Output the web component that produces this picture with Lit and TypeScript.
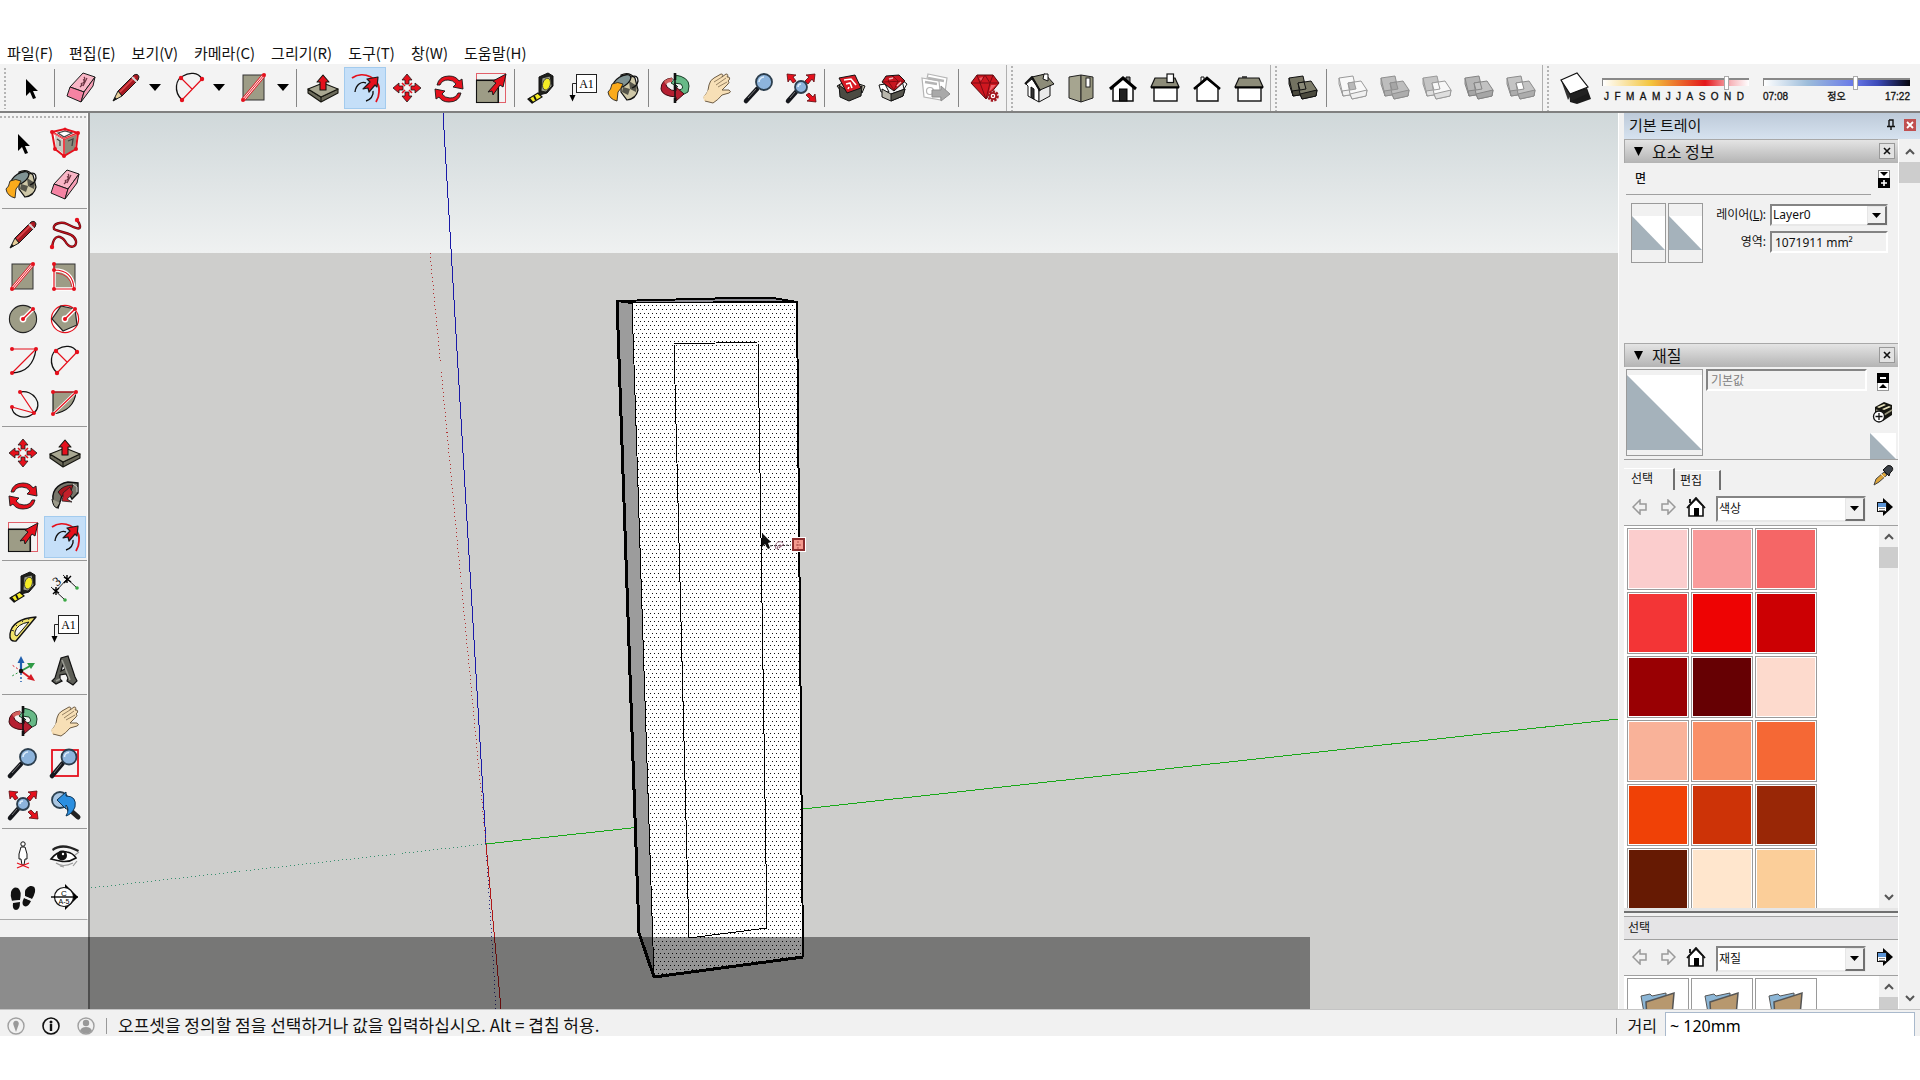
import { LitElement, html, svg, css, type SVGTemplateResult } from "lit";
import { customElement, property } from "lit/decorators.js";
import { classMap } from "lit/directives/class-map.js";
import { styleMap } from "lit/directives/style-map.js";

const RED = "#e5101c";
const INK = "#1a1a1a";
const STONE = "#9d9c86";

const dot = (x: number, y: number, r = 2) => svg`<circle cx=${x} cy=${y} r=${r} fill=${RED} />`;

const bigArrow = svg`<path d="M13 20 L21 11 L18 9 L31 2 L28 15 L25 13 L18 23 L17 19 Z" fill=${RED} stroke=${INK} stroke-width="1" stroke-linejoin="round"/>`;

const lens = (cx: number, cy: number, r: number) => svg`
  <path d="M${cx - r + 1} ${cy + r - 1} L3 29" stroke="#15171c" stroke-width="4.5" stroke-linecap="round"/>
  <path d="M${cx - r} ${cy + r - 1} L5 26" stroke="#777" stroke-width="1"/>
  <circle cx=${cx} cy=${cy} r=${r} fill="#8db4dc" stroke="#2c3e4d" stroke-width="1.8"/>
  <path d="M${cx - r + 3} ${cy} A${r - 3} ${r - 3} 0 0 1 ${cx} ${cy - r + 3}" fill="none" stroke="#dcecfa" stroke-width="1.6"/>`;

const cubes = (a: string, b: string, mid: string, edge: string, side: string) => svg`
  <g stroke=${edge} stroke-width="1" stroke-linejoin="round">
    <path d="M2 6 L16 4 L19 17 L19 22 L6 24 L2 12 Z" fill=${a}/>
    <path d="M5 19 L19 17 L19 22 L6 24 Z" fill=${side}/>
    <path d="M2 6 L5 19 L6 24" fill="none"/>
    <path d="M11 11 L24 9 L30 18 L29 24 L15 27 L13 22 Z" fill=${b}/>
    <path d="M13 22 L30 18 L29 24 L15 27 Z" fill=${side}/>
    <path d="M11 11 L17 10 L19 17 L13 18 Z" fill=${mid}/>
  </g>`;

const icons: Record<string, SVGTemplateResult> = {
  select: svg`<path d="M11 7 L11 24 L15 20 L18 27 L21 26 L18 19 L23 19 Z" fill="#000"/>`,
  component: svg`
    <path d="M3 5 L16 2 L29 6 L27 22 L15 29 L6 22 Z" fill="#fff"/>
    <path d="M16 12 L28 7 L26 22 L16 28 Z" fill="#8d8c7c"/>
    <path d="M6 8 L15 14 L15 27 L7 21 Z" fill="#c9c8c0"/>
    <path d="M9 6 L16 4 L23 6 L15 10 Z M8 12 L11 14 L11 19 M19 14 L24 12 L23 19" stroke="#444" fill="none" stroke-width="1.3"/>
    <g fill="none" stroke=${RED} stroke-width="2"><path d="M3 5 L16 2 L29 6 L27 22 L15 29 L6 22 Z M3 5 L15 12 L29 6 M15 12 L15 29"/></g>
    <g fill="none" stroke="#fbb" stroke-width="0.6"><path d="M4 6 L15 12 L28 7 M15 13 L15 28"/></g>
    ${dot(3, 5)}${dot(16, 2, 1.5)}${dot(29, 6)}${dot(27, 22)}${dot(15, 29)}${dot(6, 22)}`,
  eraser: svg`
    <g stroke=${INK} stroke-width="1" stroke-linejoin="round">
      <path d="M18 1 L30 5 L19 20 L5 15 Z" fill="#f9b6c6"/>
      <path d="M5 15 L19 20 L16 30 L2 24 Z" fill="#f583a3"/>
      <path d="M30 5 L28 14 L16 30 L19 20 Z" fill="#f79fb6"/>
    </g>
    <path d="M19 5 q2 2 -1 3 q3 0 0 3 q-3 0 -1 2 l-2 2 M22 6 l-4 8" stroke="#6b3341" fill="none" stroke-width="1.2"/>`,
  pencil: svg`
    <path d="M8 19 L24 3 Q28 1 29 5 L28 8 L12 24 Z" fill="#a51921" stroke=${INK} stroke-width="1"/>
    <path d="M10 20 L25 5" stroke="#e0474c" stroke-width="1.6"/>
    <path d="M22 5 L27 10" stroke="#d9d9d9" stroke-width="2"/>
    <path d="M8 19 L12 24 L3 29 Z" fill="#e8cf9a" stroke=${INK} stroke-width="1"/>
    <path d="M3 29 L5 25 L7 27 Z" fill="#111"/>`,
  freehand: svg`
    <path d="M3 28 C5 14 12 17 16 22 C21 31 28 28 27 22 C25 13 11 14 5 10 C3 5 12 2 18 5 C26 9 34 13 30 4 L28 1" fill="none" stroke="#5a0c10" stroke-width="2.4"/>
    <path d="M3 28 C5 14 12 17 16 22 C21 31 28 28 27 22 C25 13 11 14 5 10 C3 5 12 2 18 5 C26 9 34 13 30 4 L28 1" fill="none" stroke="#c5101c" stroke-width="1.2"/>
    ${dot(3, 28, 2.2)}${dot(28, 1, 2.2)}`,
  rect: svg`
    <rect x="5" y="3" width="21" height="25" fill=${STONE} stroke="#333" stroke-width="1"/>
    <path d="M5 28 L26 3" stroke=${RED} stroke-width="4"/><path d="M5 28 L26 3" stroke="#fff" stroke-width="2.4"/>
    <path d="M5 28 L26 3" stroke=${RED} stroke-width="1"/>${dot(5, 28)}${dot(26, 3)}`,
  roundrect: svg`
    <rect x="5" y="3" width="21" height="25" fill=${STONE} stroke="#333" stroke-width="1"/>
    <path d="M5 9 Q24 9 25 28 L5 28 Z" fill="none" stroke="#fff" stroke-width="3.4"/>
    <path d="M5 3 L5 28 L25 28 Q24 9 5 9" fill="none" stroke=${RED} stroke-width="1.2"/>
    <path d="M7 12 Q21 13 23 26" fill="none" stroke=${RED} stroke-width="0.8"/>
    ${dot(5, 3)}${dot(5, 9)}${dot(5, 28)}${dot(25, 28)}`,
  circle: svg`
    <circle cx="16" cy="16" r="13.6" fill=${STONE} stroke="#222" stroke-width="1.1"/>
    <path d="M16 16 L26 6" stroke="#fff" stroke-width="4"/><circle cx="16" cy="16" r="3.4" fill="#fff"/>
    <path d="M16 16 L26 6" stroke=${RED} stroke-width="1.4"/>${dot(16, 16, 2)}${dot(26, 6, 2)}`,
  polygon: svg`
    <circle cx="16" cy="16" r="13.6" fill="#fff" stroke=${RED} stroke-width="1.2"/>
    <path d="M12 3 L26 6 L28 22 L14 28 L3 16 Z" fill=${STONE} stroke="#222" stroke-width="1.2"/>
    <path d="M16 16 L26 6" stroke="#fff" stroke-width="4"/><circle cx="16" cy="16" r="3.4" fill="#fff"/>
    <path d="M16 16 L26 6" stroke=${RED} stroke-width="1.4"/>${dot(16, 16, 2)}${dot(26, 6, 2)}`,
  arc: svg`
    <path d="M29 4 Q26 27 5 28" fill="none" stroke="#111" stroke-width="1.3"/>
    <path d="M5 4 L29 4 L5 28" fill="none" stroke=${RED} stroke-width="1.2"/>${dot(5, 4)}${dot(29, 4)}${dot(5, 28)}`,
  arc2: svg`
    <path d="M8 28 C-1 19 2 7 9 4 C15 0 24 0 28 7" fill="none" stroke="#111" stroke-width="1.3"/>
    <path d="M8 28 L28 7 M7 6 L18 17" fill="none" stroke=${RED} stroke-width="1.2"/>${dot(7, 6, 2.2)}${dot(28, 7, 2.2)}${dot(8, 28, 2.2)}`,
  arc3: svg`
    <path d="M13 5 C26 2 37 17 27 26 C18 34 5 29 5 20" fill="none" stroke="#111" stroke-width="1.3"/>
    <path d="M13 5 L27 26 L5 20" fill="none" stroke=${RED} stroke-width="1.2"/>${dot(13, 5)}${dot(27, 26)}${dot(5, 20)}`,
  pie: svg`
    <path d="M4 5 L27 5 Q25 24 4 27 Z" fill=${STONE} stroke="#111" stroke-width="1.1"/>
    <path d="M4 27 L27 5" stroke="#fff" stroke-width="3"/>
    <path d="M4 5 L27 5 L4 27" fill="none" stroke=${RED} stroke-width="1.2"/>${dot(4, 5)}${dot(27, 5)}${dot(4, 27)}`,
  push: svg`
    <g stroke="#15150f" stroke-width="1.1" stroke-linejoin="round">
      <path d="M1 17 L1 21 L14 30 L31 21 L31 17 L14 25 Z" fill="#6c6b5b"/>
      <path d="M1 17 L16 11 L31 17 L14 25 Z" fill="#a9a892"/><path d="M14 25 L14 30"/>
      <path d="M16 3 L22 10 L19 10 L19 18 L13 18 L13 10 L10 10 Z" fill=${RED}/>
    </g>`,
  offset: svg`
    <path d="M3 6 C14 -2 32 6 30 20 Q30 25 27 30" fill="none" stroke=${RED} stroke-width="1.8"/>
    <path d="M6 20 C7 12 13 9 17 11 M24 19 C25 24 21 28 17 29" fill="none" stroke="#111" stroke-width="1.4"/>
    <path d="M14 17 L21 10 L18 7 L29 5 L28 15 L26 13 L20 20 L19 16 Z" fill=${RED} stroke=${INK} stroke-width="1.2" stroke-linejoin="round"/>`,
  move: svg`
    <g fill=${RED} stroke=${INK} stroke-width="0.8" stroke-linejoin="round">
      ${[0, 90, 180, 270].map(a => svg`<path transform="rotate(${a} 16 16)" d="M16 2 L21 8 L18 8 L18 12 L14 12 L14 8 L11 8 Z"/>`)}
    </g>
    <path d="M11 11 L14 14 M21 11 L18 14 M11 21 L14 18 M21 21 L18 18" stroke=${RED} stroke-width="1.6"/>`,
  rotate: svg`
    <g fill=${RED} stroke=${INK} stroke-width="0.9" stroke-linejoin="round">
      <path d="M4 13 Q6 4 16 4 Q23 4 26 9 L29 7 L30 17 L20 15 L23 12 Q20 8 15 8 Q9 8 7 13 Z"/>
      <path transform="rotate(180 16 17)" d="M4 13 Q6 4 16 4 Q23 4 26 9 L29 7 L30 17 L20 15 L23 12 Q20 8 15 8 Q9 8 7 13 Z"/>
    </g>`,
  scale: svg`
    <rect x="1.5" y="1.5" width="29" height="29" fill="none" stroke="#e2606a" stroke-width="1"/>
    <rect x="1.5" y="8.500" width="22" height="22" fill=${STONE} stroke="#111" stroke-width="1.1"/>
    <path d="M1 8 L24 8 M23 8 L23 31" stroke="#111"/>${bigArrow}`,
  follow: svg`
    <path d="M5 25 C1 13 8 5 19 3 L29 4 L29 14 L23 20 L19 13 Q13 13 12 20 L9 29 Z" fill="#77766a" stroke="#111" stroke-width="1.4"/>
    <path d="M9 13 Q14 6 24 6 L22 12 Q15 12 13 18 Z" fill="#a5161d" stroke="#111" stroke-width="0.8"/>
    <path d="M14 14 L21 8 L22 11 Q26 14 18 20 L23 23 L13 22 L14 17 Z" fill="#c3202a" stroke="#222" stroke-width="0.8"/>
    <path d="M3 20 Q4 28 8 29 L11 24" fill="#9b9a8a" stroke="#111"/>
    <path d="M24 5 L28 8 L28 13" stroke="#ccc" fill="none"/>`,
  tape: svg`
    <path d="M13 21 L17 25 L7 31 L3 27 Z" fill="#f5ec26" stroke="#111" stroke-width="1.2"/>
    <path d="M9 24 L11 28 M4 26 L8 31" stroke="#111" stroke-width="1.8"/>
    <path d="M14 5 L23 1 L28 4 L28 14 L22 21 L14 23 Z" fill="#1e1f1c" stroke="#111"/>
    <path d="M17 6 L25 4 L27 14 L21 20 L16 19 Z" fill="#9da090" stroke="#111" stroke-width="0.8"/>
    <ellipse cx="21.500" cy="12" rx="3.800" ry="6" fill="#f5ec26" stroke="#333" stroke-width="0.8" transform="rotate(15 21 12)"/>`,
  text: svg`
    <rect x="9.500" y="2.500" width="20" height="18" fill="#fff" stroke="#222"/>
    <path d="M9 11.500 L5.500 11.500 L5.500 24" fill="none" stroke="#222"/><path d="M2.500 23 L8.500 23 L5.500 29.500 Z" fill="#000"/>
    <text x="19.500" y="16" font-size="12" text-anchor="middle" font-family="Liberation Serif, serif" fill="#000">A1</text>`,
  bucket: svg`
    <path d="M12 3 Q20 -1 26 6 L29 18 Q27 27 18 28 L12 20 Z" fill="#cfc8a8" stroke="#111" stroke-width="1.2"/>
    <path d="M20 9 L28 14 L27 20 L21 17 Z M14 15 L21 17 L19 23 L13 20 Z" fill="#56554a"/>
    <ellipse cx="13" cy="9.500" rx="10" ry="5" fill="#809393" stroke="#111" stroke-width="1.3" transform="rotate(-32 13 9.500)"/>
    <path d="M3 12 Q9 9 14 12 Q12 17 9 20 L8 29 Q0 27 -1 20 Q2 18 3 12 Z" fill="#fbab1c" stroke="#222" stroke-width="0.9"/>
    <path d="M22 5 Q29 2 29 9 Q28 14 23 16" fill="none" stroke="#111" stroke-width="1.3"/>`,
  orbit: svg`
    <path d="M16 3 Q30 5 30 14 L29 20 Q25 23 20 23 L20 18 Q26 17 22 12 L15 11 L19 15 L12 11 L17 5 Z" fill="#67b987" stroke="#173b25" stroke-width="1"/>
    <path d="M13 8 Q4 9 8 15 Q12 19 17 19 L17 15 L25 22 L17 29 L17 25 Q3 24 2 17 Q2 7 13 6 Z" fill="#b51f31" stroke="#3c0c12" stroke-width="1"/>
    <path d="M5 9 Q9 6 13 6 L13 10 Q8 10 7 13 Z" fill="#d1605d"/>
    <path d="M16 1 L16 8 M16 13 L16 18 M16 26 L16 31" stroke="#111" stroke-width="2.600"/>
    <path d="M16 8 L16 26" stroke="#111" stroke-width="1.500"/>`,
  hand: svg`
    <path d="M4 29 L3 25 Q8 20 8 13 Q9 8 13 6 L20 2 Q23 2 21 5 L25 2 Q28 2 26 5 L28 5 Q30 7 27 9 Q29 10 27 12 L21 18 L28 18 Q31 20 28 21 L21 23 Q17 28 12 31 Z" fill="#f7dfb6" stroke="#6d5c45" stroke-width="1"/>
    <path d="M13 10 L21 5 M15 13 L25 6 M17 15 L26 10" stroke="#7d6a4e" stroke-width="0.8" fill="none"/>
    <path d="M4 29 L3 25 Q6 23 8 18" stroke="#f7dfb6" stroke-width="1.500" fill="none"/>`,
  zoom: lens(21, 10, 8),
  zoomwin: svg`<rect x="3" y="3" width="26" height="26" fill="none" stroke=${RED} stroke-width="1.800"/>${lens(20, 10, 7.5)}`,
  extents: svg`
    ${lens(16, 15, 6)}
    <g fill=${RED} stroke="#5b0a0e" stroke-width="0.800">
      <path d="M2 2 L11 3 L8 5 L11 9 L8 11 L5 7 L3 10 Z"/><path d="M30 2 L21 3 L24 5 L20 9 L23 12 L27 7 L29 10 Z"/>
      <path d="M31 30 L22 29 L25 27 L21 23 L24 21 L28 25 L30 22 Z"/>
    </g>`,
  previous: svg`
    <path d="M20 20 L29 28" stroke="#222" stroke-width="5" stroke-linecap="round"/>
    <circle cx="11" cy="11" r="8" fill="#a9c6e2" stroke="#2c4150" stroke-width="1.800"/>
    <path d="M8 11 L17 3 L17 7 Q28 7 26 18 Q23 25 17 27 Q21 20 17 16 L17 20 Z" fill="#2b8fe0" stroke="#0e3556" stroke-width="1"/>`,
  warehouse: svg`
    <g stroke="#111" stroke-width="1" stroke-linejoin="round">
      <path d="M2 14 L9 10 L12 19 L10 24 Z M24 12 L30 14 L27 21 Z" fill="#c5bfae"/>
      <path d="M4 13 L12 19 L27 14 L26 24 L14 29 L5 25 Z" fill="#4b4a42"/>
      <path d="M4 6 L20 3 L26 16 L12 21 Z" fill="#d81a24"/>
    </g>
    <path d="M9 8 L16 7 L21 13 M11 12 L15 11 L17 16 M13 17 L14 15" fill="none" stroke="#fff" stroke-width="1.600"/>`,
  extwarehouse: svg`
    <g stroke="#111" stroke-width="1" stroke-linejoin="round">
      <path d="M2 13 L8 12 L12 20 L4 20 Z M25 8 L30 12 L27 17 Z" fill="#fff"/>
      <path d="M5 17 L14 22 L28 17 L26 24 L14 29 L5 25 Z" fill="#b9b7ad"/>
      <path d="M14 22 L28 17 L26 24 L14 29 Z" fill="#55544c"/>
      <path d="M9 4 L22 3 L28 9 L17 19 L5 10 Z" fill="#c9141f"/>
    </g>
    <path d="M6 10 L28 9 M11 9 L17 18 L21 9 L16 4 L11 9" fill="none" stroke="#7c0910" stroke-width="0.900"/>
    <path d="M12 7 L16 6 M20 14 L24 10" stroke="#f9b9bc" stroke-width="1.400"/>`,
  layout: svg`
    <g fill="#fff" stroke="#b5b5b5" stroke-width="1.200">
      <path d="M9 2 L28 6 L26 20 L6 16 Z"/><path d="M3 6 L20 9 L22 28 L5 25 Z"/>
      <path d="M6 10 L18 12 M9 6 L25 9" stroke-width="2.400"/><circle cx="11" cy="19" r="3.500"/>
    </g>
    <path d="M13 18 L22 18 L22 14 L31 22 L22 29 L22 25 L13 25 Z" fill="#a9a9a9" stroke="#8f8f8f"/>`,
  ruby: svg`
    <path d="M8 3 L24 3 L30 11 L17 27 L2 11 Z" fill="#cf1720" stroke="#540a0e" stroke-width="1"/>
    <path d="M2 11 L30 11 M8 3 L11 11 L17 27 L21 11 L24 3 M11 11 L16 3 L21 11" fill="none" stroke="#7c0a12" stroke-width="1"/>
    <path d="M10 6 L14 5 L12 9 Z M22 13 L27 13 L20 20 Z" fill="#ee6068"/>
    <circle cx="24" cy="24" r="4.500" fill="#fff" stroke="#a31820" stroke-width="2.600" stroke-dasharray="2.200 1.200"/>
    <circle cx="24" cy="24" r="3.200" fill="#fff" stroke="#a31820" stroke-width="1.800"/><circle cx="24" cy="24" r="1" fill="#a31820"/>`,
  iso: svg`
    <g stroke="#111" stroke-width="1" stroke-linejoin="round">
      <path d="M3 12 L9 7 L16 17 L16 30 L5 24 L5 14 Z" fill="#fff"/><path d="M16 17 L27 13 L27 24 L16 30 Z" fill="#e9e9e9"/>
      <path d="M9 5 L22 2 L31 12 L17 18 Z" fill="#8d8c79"/><path d="M2 12 L9 5 L17 19" fill="none" stroke-width="2"/>
      <path d="M21 2 L25 2 L25 9 L20 7 Z" fill="#fff"/><path d="M8 15 L11 17 L11 27 L8 25 Z" fill="#333"/>
    </g>`,
  top: svg`
    <g stroke="#222" stroke-width="1"><path d="M4 5 L16 3 L16 30 L4 26 Z" fill="#a6a590"/><path d="M16 3 L28 5 L28 26 L16 30 Z" fill="#98977f"/>
    <rect x="21" y="6" width="4" height="9" fill="#fff"/></g>`,
  front: svg`
    <path d="M19 11 L19 5 L23 5 L23 12" fill="#777" stroke="#111"/>
    <path d="M6 15 L6 29 L26 29 L26 15 L16 6 Z" fill="#fff" stroke="#111" stroke-width="1.500"/>
    <path d="M3 17 L16 6 L29 17" fill="none" stroke="#000" stroke-width="3"/><rect x="12.500" y="17" width="7.500" height="12" fill="#222" stroke="#000"/>`,
  right: svg`
    <rect x="5" y="15" width="23" height="14" fill="#fff" stroke="#111" stroke-width="1.400"/>
    <path d="M6 6 L26 6 L30 15 L2 15 Z" fill="#8d8c79" stroke="#111" stroke-width="1.200"/>
    <path d="M2 15.500 L30 15.500" stroke="#000" stroke-width="2"/><rect x="18" y="2" width="6.500" height="8.500" fill="#fff" stroke="#111" stroke-width="1.200"/>`,
  back: svg`
    <path d="M10 11 L10 5 L13 5 L13 12" fill="#fff" stroke="#111"/>
    <path d="M6 15 L6 29 L27 29 L27 15 L16 7 Z" fill="#fff" stroke="#111" stroke-width="1.400"/>
    <path d="M3 17 L16 6 L29 17" fill="none" stroke="#000" stroke-width="2.600"/>`,
  left: svg`
    <rect x="5" y="15" width="23" height="14" fill="#fff" stroke="#111" stroke-width="1.400"/>
    <path d="M9 4 L14 4 L14 7 L9 7 Z" fill="#555"/>
    <path d="M6 6 L26 6 L30 15 L2 15 Z" fill="#8d8c79" stroke="#111" stroke-width="1.200"/><path d="M2 15.500 L30 15.500" stroke="#000" stroke-width="2"/>`,
  shell: cubes("#737261", "#7d7c6a", "#8b8a78", "#111", "#4b4a3e"),
  intersect: cubes("#f8f8f8", "#f8f8f8", "#b9b9b9", "#9a9a9a", "#f0f0f0"),
  union: cubes("#bdbdbd", "#bdbdbd", "#a6a6a6", "#8f8f8f", "#adadad"),
  subtract: cubes("#c4c4c4", "#f8f8f8", "#f8f8f8", "#9a9a9a", "#dedede"),
  trim: cubes("#b5b5b5", "#c2c2c2", "#c2c2c2", "#858585", "#a6a6a6"),
  split: cubes("#c4c4c4", "#c4c4c4", "#fff", "#8c8c8c", "#acacac"),
  shadow: svg`
    <path d="M10 19 L28 16 L32 27 L18 32 L11 30 Z" fill="#1b1b1b"/>
    <path d="M2 8 L9 28 L12 23 L4 8 Z" fill="#333"/>
    <path d="M10 22 L28 17 L28 22 L12 29 Z" fill="#222"/>
    <path d="M2 8 L18 1 L29 15 L11 22 Z" fill="#fff" stroke="#111" stroke-width="1.200"/>`,
  dimension: svg`
    <path d="M7 20 L18 8 M2 16 L15 28 M14 4 L28 17" stroke="#222" stroke-width="1"/>
    <path d="M4 18 L10 22 M10 17 L4 23 M7 16 L7 24 M15 6 L22 11 M22 5 L15 12 M18 4 L18 12" stroke="#000" stroke-width="1.400"/>
    <text x="3" y="14" font-size="13" font-family="Liberation Serif, serif" fill="#000" transform="rotate(-40 8 8)">3</text>
    <circle cx="16" cy="29" r="1.800" fill="#3aa844"/><circle cx="28" cy="17" r="1.800" fill="#3aa844"/>`,
  protractor: svg`
    <path d="M29 4 L9 28 Q2 29 3 21 Q5 6 29 4 Z" fill="#f2e36b" stroke="#111" stroke-width="1.400" stroke-linejoin="round"/>
    <path d="M22 9 L10 23 Q7 23 8 19 Q10 11 22 9 Z" fill="#f3f3f3" stroke="#111" stroke-width="1"/>
    <path d="M4 17 l3 1 M8 11 l2 2 M14 7 l2 2 M21 5 l1 2" stroke="#333"/>`,
  axes: svg`
    <path d="M14 16 L14 7" stroke="#1f5fae" stroke-width="2.200"/><path d="M10.500 8 L14 1 L17.500 8 Z" fill="#1f5fae"/>
    <path d="M14 16 L23 11" stroke="#2f9a45" stroke-width="2"/><path d="M20 8 L28 8 L24 14 Z" fill="#2f9a45"/>
    <path d="M14 16 L22 22" stroke="#d51a24" stroke-width="2"/><path d="M20 24 L24 19 L28 26 Z" fill="#d51a24"/>
    <path d="M14 16 L5 10" stroke="#d51a24" stroke-dasharray="2 2"/><path d="M14 16 L5 21" stroke="#2f9a45" stroke-dasharray="2 2"/>
    <path d="M14 18 L14 27" stroke="#1f5fae" stroke-width="1.500" stroke-dasharray="2 2"/><circle cx="14" cy="16" r="2.200" fill="#111"/>`,
  text3d: svg`
    <path fill-rule="evenodd" d="M3 26 L6 23 L12 3 L19 1 L26 22 L28 26 L24 30 L18 26 L19 23 L17 19 L11 20 L11 24 L13 26 L7 29 Z M12 16 L16 14 L14 9 Z" fill="#5d5e57" stroke="#111" stroke-width="1.200"/>
    <path d="M13 5 L21 25 M7 26 L11 24" stroke="#9a9b93" stroke-width="1.600"/>`,
  position: svg`
    <circle cx="16" cy="5" r="2.200" fill="#fff" stroke="#111"/>
    <path d="M14 8 L18 8 L20 15 L20 20 L18 20 L17 26 L15 26 L14 20 L12 20 L12 15 Z" fill="#fff" stroke="#111"/>
    <path d="M10 24 L22 29 M22 24 L10 29" stroke=${RED} stroke-width="1.300"/>`,
  look: svg`
    <path d="M3 10 Q13 2 30 11 L29 13 Q14 5 4 12 Z" fill="#222"/>
    <path d="M2 20 Q9 11 18 13 Q24 14 27 19 Q19 24 11 22 Q6 21 2 20 Z" fill="#fff" stroke="#111" stroke-width="1.600"/>
    <circle cx="13" cy="16.500" r="5" fill="#111"/><circle cx="14" cy="15" r="1.200" fill="#fff"/>
    <path d="M7 24 Q14 29 24 24 M11 27 L15 28 M26 16 L30 13 M24 27 L28 22" stroke="#999" fill="none" stroke-width="1.200"/>`,
  walk: svg`
    <g fill="#111"><path d="M4 11 Q6 5 11 7 Q15 10 13 19 L5 20 Q3 15 4 11 Z M6 22 L13 21 Q13 29 9 29 Q5 29 6 22 Z"/>
    <path d="M18 15 Q17 7 23 5 Q29 4 28 11 Q27 15 25 18 Z M17 17 L24 20 Q21 27 17 25 Q14 23 17 17 Z"/></g>
    <path d="M5 20.500 L13 20 M17 16 L25 19" stroke="#eee" stroke-width="1.400"/>`,
  section: svg`
    <path d="M16 3 L29 16 L16 29 Z" fill="#000"/>
    <circle cx="15" cy="16" r="9.500" fill="#fff" stroke="#111" stroke-width="1.200"/><path d="M2 16 L29 16" stroke="#000" stroke-width="1.400"/>
    <text x="15" y="14.500" font-size="8" text-anchor="middle" font-family="Liberation Sans, sans-serif" fill="#000">C</text>
    <text x="15" y="23" font-size="7" text-anchor="middle" font-family="Liberation Sans, sans-serif" fill="#000">A-5</text>`,
};

type Tool = [icon: string, label: string];
const SEP: Tool = ["", ""];

const standardTools: Tool[] = [
  ["push", "밀기/끌기"], ["offset", "오프셋"], ["move", "이동"], ["rotate", "회전"], ["scale", "배율"], SEP,
  ["tape", "줄자"], ["text", "텍스트"], ["bucket", "페인트 통"], SEP,
  ["orbit", "궤도"], ["hand", "이동 보기"], ["zoom", "확대/축소"], ["extents", "전체 보기"], SEP,
  ["warehouse", "모델 가져오기"], ["extwarehouse", "확장 프로그램"], ["layout", "레이아웃으로 보내기"], SEP,
  ["ruby", "확장 관리자"],
];
const viewTools: Tool[] = [["iso", "등각"], ["top", "맨 위"], ["front", "앞면"], ["right", "오른쪽"], ["back", "뒷면"], ["left", "왼쪽"]];
const solidTools: Tool[] = [
  ["shell", "외부 셸"], SEP, ["intersect", "교차"], ["union", "합집합"], ["subtract", "빼기"], ["trim", "자르기"], ["split", "분할"],
];
const sideTools: Tool[][] = [
  [["select", "선택"], ["component", "구성요소"], ["bucket", "페인트 통"], ["eraser", "지우개"]],
  [["pencil", "선"], ["freehand", "자유선"], ["rect", "직사각형"], ["roundrect", "회전 직사각형"], ["circle", "원"], ["polygon", "다각형"],
   ["arc", "호"], ["arc2", "2점 호"], ["arc3", "3점 호"], ["pie", "파이"]],
  [["move", "이동"], ["push", "밀기/끌기"], ["rotate", "회전"], ["follow", "따라가기"], ["scale", "배율"], ["offset", "오프셋"]],
  [["tape", "줄자"], ["dimension", "치수"], ["protractor", "각도기"], ["text", "텍스트"], ["axes", "축"], ["text3d", "3D 텍스트"]],
  [["orbit", "궤도"], ["hand", "이동 보기"], ["zoom", "확대/축소"], ["zoomwin", "창 확대"], ["extents", "전체 보기"], ["previous", "이전"]],
  [["position", "카메라 배치"], ["look", "둘러보기"], ["walk", "걷기"], ["section", "단면"]],
];

const swatches = [
  "#fbcdcd", "#f99b9b", "#f56666", "#f33536", "#ee0303", "#cc0003", "#990003", "#660003", "#fddacd",
  "#f9b299", "#f99068", "#f56835", "#f04106", "#cd3307", "#992706", "#661a03", "#ffe6cd", "#fbce99",
];

@customElement("tool-button")
export class ToolButton extends LitElement {
  @property() icon = "";
  @property() label = "";
  @property({ type: Boolean }) active = false;

  static styles = css`
    :host { display: block; }
    .btn { display: grid; place-items: center; width: 42px; height: 42px; padding: 0; border: 1px solid transparent; background: none; }
    .btn.active { background: #c5dff8; border-color: #a3cbee; }
    .btn svg { display: block; width: 32px; height: 32px; overflow: visible; }
  `;

  render() {
    return html`<button class=${classMap({ btn: true, active: this.active })} aria-label=${this.label} aria-pressed=${this.active ? "true" : "false"}>
      <svg viewBox="0 0 32 32" fill="none" aria-hidden="true">${icons[this.icon]}</svg>
    </button>`;
  }
}

@customElement("model-view")
export class ModelView extends LitElement {
  static styles = css`
    :host { display: block; min-width: 0; min-height: 0; overflow: hidden; border-left: 2px solid #858585; background: #cececc; }
    .scene { display: block; width: 100%; height: 100%; }
  `;

  render() {
    return html`<svg class="scene" viewBox="90 113 1528 896" preserveAspectRatio="xMinYMin slice" role="img" aria-label="모델 보기">
      <defs>
        <linearGradient id="sky" x1="0" y1="0" x2="0" y2="1"><stop offset="0" stop-color="#d0d8da"/><stop offset="1" stop-color="#eff1f1"/></linearGradient>
        <pattern id="dots" width="4" height="8" patternUnits="userSpaceOnUse">
          <rect width="4" height="8" fill="#fff"/><rect x="0" y="1" width="1" height="1" fill="#111"/><rect x="2" y="5" width="1" height="1" fill="#111"/>
        </pattern>
      </defs>
      <rect x="90" y="113" width="1528" height="140" fill="url(#sky)"/>
      <rect x="90" y="253" width="1528" height="756" fill="#cececc"/>
      <g fill="none" stroke-width="1" shape-rendering="crispEdges">
        <path d="M443 113 L486 844" stroke="#1a1aa8"/>
        <path d="M430 253 L486 844" stroke="#b03030" stroke-dasharray="1 3"/>
        <path d="M486 844 L496 1009" stroke="#2a2a80" stroke-dasharray="1 3"/>
        <path d="M486 844 L501 1009" stroke="#b01818"/>
        <path d="M486 844 L1618 719" stroke="#18a818"/>
        <path d="M486 844 L90 888" stroke="#3a9070" stroke-dasharray="1 3"/>
      </g>
      <g shape-rendering="crispEdges" stroke-linejoin="round">
        <path d="M617 301 L632 303 L654 977 L639 933 Z" fill="#9c9c9c" stroke="#000" stroke-width="1"/>
        <path d="M617 301 L735 298 L773 298 L797 302 L632 303 Z" fill="#8b8b92" stroke="#000" stroke-width="2"/>
        <path d="M632 303 L797 302 L803 957 L654 977 Z" fill="url(#dots)" stroke="#000" stroke-width="1"/>
        <path d="M797 302 L803 957" fill="none" stroke="#000" stroke-width="2"/>
        <path d="M617 301 L639 933 L654 977 L803 957" fill="none" stroke="#000" stroke-width="3"/>
        <path d="M674 344 L758 342 L767 928 L689 938 Z" fill="none" stroke="#000" stroke-width="1"/>
      </g>
      <path d="M766 546 L792 545" stroke="#222" stroke-dasharray="2 2"/>
      <path d="M776 549 C774 542 780 540 783 543 M778 550 Q776 545 781 545 L779 548 L784 544" fill="none" stroke="#8c5a70" stroke-width="1"/>
      <rect x="791" y="537" width="15" height="15" fill="#fff"/><rect x="793" y="539" width="11" height="11" fill="#f59a8e" stroke="#8c2d2d" stroke-width="2"/>
      <path d="M796 545 L802 545 M798 541 L798 549" stroke="#b0504a" stroke-dasharray="2 1"/>
      <path d="M762 533 L762 547 L765 544 L768 549 L770 548 L768 543 L771 542 Z" fill="#111"/>
    </svg>`;
  }
}

@customElement("side-tray")
export class SideTray extends LitElement {
  static styles = css`
    * { box-sizing: border-box; }
    :host { display: flex; flex-direction: column; min-height: 0; box-sizing: border-box; width: 302px; padding-left: 5px; border-left: 1px solid #fff; background: #f1f1f1;
      font: 12px/16px "Noto Sans", "Noto Sans CJK KR", sans-serif; color: #111; }
    button { padding: 0; border: 0; background: none; font: inherit; color: inherit; }
    svg { display: block; }
    .title { display: flex; align-items: center; gap: 8px; height: 26px; padding: 0 4px 2px 5px; background: linear-gradient(#bdcad9, #d6e2ef); flex: none; }
    .title h1 { flex: 1; margin: 0; font: 15px/20px "Noto Sans CJK KR", sans-serif; }
    .close { display: grid; place-items: center; width: 12px; height: 12px; background: #c05050; }
    .row { display: flex; flex: 1; min-height: 0; }
    .content { display: flex; flex-direction: column; flex: 1; min-width: 0; border-right: 1px solid #fff; }
    .head { display: flex; align-items: center; height: 24px; flex: none; padding: 0 3px 1px 9px; border-top: 1px solid #a8a8a8; border-left: 1px solid #a8a8a8; background: linear-gradient(#e4e4e4, #b4b4b4); }
    .head .toggle { display: flex; align-items: center; gap: 9px; flex: 1; font: 16px/20px "Noto Sans CJK KR", sans-serif; }
    .head .x { display: grid; place-items: center; width: 16px; height: 16px; border: 1px solid #999; background: #e2e2e2; }
    .entity { display: flex; flex-direction: column; height: 180px; padding: 1px 10px 0 2px; flex: none; }
    .kind { display: flex; align-items: center; justify-content: space-between; height: 30px; margin-right: -2px; padding-left: 9px; }
    .kind h2 { margin: 0; font-size: 12px; font-weight: 500; }
    .rule { width: 245px; height: 1px; margin: 0; border: 0; background: #a0a0a0; }
    .props { display: flex; padding: 8px 0 0 5px; gap: 2px; }
    .sample { width: 35px; height: 60px; border: 1px solid #9a9a9a; padding: 12px 0; }
    .form { display: grid; grid-template-columns: 1fr 118px; gap: 5px 4px; flex: 1; padding-top: 1px; align-content: start; align-items: center; text-align: right; }
    .field { width: 100%; height: 22px; padding: 0 3px; border: 2px solid; border-color: #848484 #fff #fff #848484; border-radius: 0; background: #f1f1f1; font: inherit; color: #111; outline: 0; }
    .drop { display: flex; position: relative; }
    .drop select { appearance: none; width: 100%; height: 22px; padding: 0 20px 0 1px; border: 2px solid; border-color: #848484 #e8e8e8 #e8e8e8 #848484; border-radius: 0; background: #fff; font: inherit; color: #111; }
    .drop .knob { position: absolute; top: 2px; right: 1px; bottom: 1px; width: 20px; display: grid; place-items: center; pointer-events: none; background: #f1f1f1; border: 1px solid; border-color: #e6e6e6 #707070 #707070 #e6e6e6; border-right-width: 2px; border-bottom-width: 2px; }
    .nav .drop { flex: 1; }
    .nav .drop select { height: 26px; }
    .material { display: flex; gap: 3px; height: 93px; padding: 2px 2px 0; border-bottom: 1px solid #a0a0a0; flex: none; }
    .preview { width: 77px; height: 87px; padding: 5px 0; border: 1px solid #9a9a9a; }
    .material .name { width: 161px; color: #808080; }
    .material .acts { display: flex; flex-direction: column; align-items: center; gap: 10px; flex: 1; padding-top: 4px; }
    .tabs { display: flex; align-items: flex-end; height: 30px; flex: none; }
    .tab { width: 46px; height: 20px; text-align: left; padding-left: 5px; border-right: 2px solid #707070; border-top: 1px solid #fff; }
    .tab.on { width: 51px; height: 22px; padding-left: 7px; padding-bottom: 2px; }
    .pick { margin: 0 4px 4px auto; }
    .nav { display: flex; align-items: center; height: 36px; padding: 2px 4px 0 8px; gap: 10px; border-bottom: 1px solid #a0a0a0; flex: none; }
    .nav > button { margin-bottom: 4px; }
    .nav .detail { width: 18px; }
    .nav .back { margin-right: 2px; }
    .list { display: flex; background: #fff; min-height: 0; overflow: hidden; }
    .list.colors { flex: 1; }
    .list.folders { height: 33px; flex: none; }
    .cells { display: grid; grid-template-columns: repeat(3, 62px); grid-auto-rows: 62px; gap: 2px; flex: 1; padding: 2px 3px; overflow: hidden; }
    .cell { border: 1px solid #9a9a9a; padding: 1px; background: #fff; }
    .cell .ink { display: block; width: 100%; height: 100%; }
    .cell.folder { display: grid; place-items: start center; padding-top: 12px; }
    .bar { display: flex; flex-direction: column; align-items: center; width: 19px; background: #f1f1f1; flex: none; }
    .bar.outer { width: 21px; padding-top: 2px; }
    .bar button { display: grid; place-items: center; width: 100%; height: 21px; flex: none; }
    .thumb { width: 100%; height: 21px; background: #cdcdcd; flex: none; }
    .grow { flex: 1; min-height: 0; }
    .split { height: 8px; flex: none; border-top: 3px solid #e6e6e6; background: linear-gradient(#707070 0 2px, #f1f1f1 2px); }
    .sub { height: 24px; flex: none; margin: 0; padding: 3px 4px; border: solid #a0a0a0; border-width: 1px 0; background: #e5e4e6; font-size: 12px; font-weight: 400; }
  `;

  private face() {
    return html`<svg width="100%" height="100%" viewBox="0 0 10 10" preserveAspectRatio="none" aria-hidden="true">
      <rect width="10" height="10" fill="#fff"/><path d="M0 0 L10 10 L0 10 Z" fill="#a5b2bb"/></svg>`;
  }

  private chevron(up: boolean) {
    return html`<button aria-label=${up ? "위로 스크롤" : "아래로 스크롤"}><svg width="10" height="7" viewBox="0 0 10 7" fill="none" aria-hidden="true">
      <path d=${up ? "M1 6 L5 2 L9 6" : "M1 1 L5 5 L9 1"} stroke="#555" stroke-width="2"/></svg></button>`;
  }

  private head(text: string) {
    return html`<div class="head">
      <button class="toggle" aria-expanded="true"><svg width="9" height="9" viewBox="0 0 9 9" aria-hidden="true"><path d="M0 0 L9 0 L4.500 9 Z"/></svg>${text}</button>
      <button class="x" aria-label="닫기"><svg width="8" height="8" viewBox="0 0 8 8" aria-hidden="true"><path d="M1 1 L7 7 M7 1 L1 7" stroke="#111" stroke-width="1.600"/></svg></button>
    </div>`;
  }

  private knob() {
    return html`<span class="knob"><svg width="9" height="5" viewBox="0 0 9 5" aria-hidden="true"><path d="M0 0 L9 0 L4.500 5 Z"/></svg></span>`;
  }

  private nav(value: string, name: string) {
    return html`<div class="nav">
      <button class="back" aria-label="뒤로"><svg width="16" height="16" viewBox="0 0 16 16" fill="none" aria-hidden="true"><path d="M1 8 L8 1 L8 5 L14 5 L14 11 L8 11 L8 15 Z" stroke="#999" stroke-width="1.500"/></svg></button>
      <button aria-label="앞으로"><svg width="16" height="16" viewBox="0 0 16 16" fill="none" aria-hidden="true"><path d="M15 8 L8 1 L8 5 L2 5 L2 11 L8 11 L8 15 Z" stroke="#999" stroke-width="1.500"/></svg></button>
      <button aria-label="홈"><svg width="20" height="20" viewBox="0 0 20 20" fill="none" aria-hidden="true">
        <path d="M3 9 L3 19 L17 19 L17 9 L10 2 Z" fill="#fff" stroke="#111" stroke-width="1.600"/><path d="M1 11 L10 1 L19 11 M4 6 L4 2" stroke="#111" stroke-width="1.800"/><rect x="8" y="11" width="5" height="8" fill="#000"/></svg></button>
      <div class="drop"><select aria-label=${name}><option>${value}</option></select>${this.knob()}</div>
      <button class="detail" aria-label="세부 정보"><svg width="18" height="18" viewBox="0 0 18 18" aria-hidden="true">
        <path d="M7 0 L17 9 L7 18 Z" fill="#000"/><rect x="1.500" y="4.500" width="9" height="9" fill="#fff" stroke="#111"/><rect x="2" y="5" width="8" height="4" fill="#5a94d6"/><path d="M3 10.500 L9 10.500 M3 12.500 L9 12.500" stroke="#888"/></svg></button>
    </div>`;
  }

  render() {
    return html`
      <header class="title">
        <h1>기본 트레이</h1>
        <button aria-label="고정"><svg width="10" height="12" viewBox="0 0 10 12" fill="none" aria-hidden="true"><path d="M3 1 L7 1 L7 7 M3 1 L3 7 M1 7.500 L9 7.500 M5 8 L5 11" stroke="#111" stroke-width="1.400"/></svg></button>
        <button class="close" aria-label="트레이 닫기"><svg width="8" height="8" viewBox="0 0 8 8" aria-hidden="true"><path d="M1 1 L7 7 M7 1 L1 7" stroke="#fff" stroke-width="1.800"/></svg></button>
      </header>
      <div class="row">
        <div class="content">
          ${this.head("요소 정보")}
          <section class="entity">
            <div class="kind"><h2>면</h2>
              <button aria-label="세부 정보 표시"><svg width="12" height="18" viewBox="0 0 12 18" aria-hidden="true"><rect x="0.500" y="0.500" width="11" height="8" fill="#fff" stroke="#888"/><path d="M2 2 L10 2 L6 6 Z"/><rect y="8" width="12" height="10"/><path d="M3 13 L9 13 M6 10 L6 16" stroke="#fff" stroke-width="1.600"/></svg></button>
            </div>
            <hr class="rule">
            <div class="props">
              <div class="sample">${this.face()}</div><div class="sample">${this.face()}</div>
              <div class="form">
                <label for="layer">레이어(<u>L</u>):</label>
                <div class="drop"><select id="layer"><option>Layer0</option></select>${this.knob()}</div>
                <label for="area">영역:</label>
                <input class="field" id="area" readonly value="1071911 mm²">
              </div>
            </div>
          </section>
          ${this.head("재질")}
          <section class="material">
            <div class="preview">${this.face()}</div>
            <input class="field name" aria-label="재질 이름" disabled value="기본값">
            <div class="acts">
              <button aria-label="보조 창 숨기기"><svg width="12" height="18" viewBox="0 0 12 18" aria-hidden="true"><rect x="0.500" y="8.500" width="11" height="9" fill="#fff" stroke="#999"/><path d="M2 15 L10 15 L6 11 Z"/><rect width="12" height="10"/><path d="M3 5 L9 5" stroke="#fff" stroke-width="2"/></svg></button>
              <button aria-label="재질 만들기"><svg width="22" height="22" viewBox="0 0 22 22" aria-hidden="true">
                <path d="M3 6 L12 1 L20 4 L20 14 L11 20 L3 16 Z" fill="#15150f"/><path d="M5 6 L12 3 L14 4 L7 7 Z M10 8 L17 5 L19 6 L12 9 Z" fill="#e9e3bd"/><path d="M12 14 L20 9 M4 9 L11 12" stroke="#98957d" stroke-width="1.500"/>
                <circle cx="7" cy="15.500" r="5.500" fill="#fff" stroke="#111" stroke-width="1.300"/><path d="M3.500 15.500 L10.500 15.500 M7 12 L7 19" stroke="#111" stroke-width="1.300"/></svg></button>
              <svg width="26" height="26" viewBox="0 0 26 26" aria-hidden="true"><rect width="26" height="26" fill="#fff"/><path d="M0 0 L26 26 L0 26 Z" fill="#a5b2bb"/></svg>
            </div>
          </section>
          <div class="tabs" role="tablist">
            <button class="tab on" role="tab" aria-selected="true">선택</button><button class="tab" role="tab" aria-selected="false">편집</button>
            <button class="pick" aria-label="샘플 페인트"><svg width="22" height="22" viewBox="0 0 22 22" aria-hidden="true">
              <path d="M2 21 L4 15 L12 8 L15 11 L7 18 Z" fill="#dca43a" stroke="#444"/><path d="M9 10 L13 14" stroke="#ddd"/><path d="M11 6 L17 12 L18 9 Q23 5 19 2 Q16 0 13 4 Z" fill="#3b4046" stroke="#111"/></svg></button>
          </div>
          ${this.nav("색상", "컬렉션")}
          <div class="list colors">
            <div class="cells">${swatches.map((c, i) => html`<button class="cell" aria-label=${"색상 " + (i + 1)}><span class="ink" style=${styleMap({ background: c })}></span></button>`)}</div>
            <div class="bar">${this.chevron(true)}<div class="thumb"></div><div class="grow"></div>${this.chevron(false)}</div>
          </div>
          <div class="split"></div>
          <h2 class="sub">선택</h2>
          ${this.nav("재질", "보조 컬렉션")}
          <div class="list folders">
            <div class="cells">${[1, 2, 3].map(n => html`<button class="cell folder" aria-label=${"폴더 " + n}><svg width="36" height="46" viewBox="0 0 36 46" aria-hidden="true">
              <path d="M1 5 L10 3 L12 5 L26 2 L26 40 L8 44 Z" fill="#8cb6d6" stroke="#555"/><path d="M6 11 L34 2 L31 36 L8 44 Z" fill="#b7986f" stroke="#555" stroke-width="1.500"/></svg></button>`)}</div>
            <div class="bar">${this.chevron(true)}<div class="thumb"></div></div>
          </div>
        </div>
        <div class="bar outer">${this.chevron(true)}<div class="thumb"></div><div class="grow"></div>${this.chevron(false)}</div>
      </div>`;
  }
}

@customElement("app-root")
export class AppRoot extends LitElement {
  static styles = css`
    * { box-sizing: border-box; }
    :host { display: flex; flex-direction: column; height: 100vh; padding: 43px 0 44px; box-sizing: border-box; background: #fff; color: #111;
      font: 15px/20px "Noto Sans CJK KR", sans-serif; }
    button { font: inherit; color: inherit; }
    .menu { display: flex; gap: 16px; height: 21px; padding: 0 7px; margin: 0; list-style: none; flex: none; }
    .menu button { padding: 0; border: 0; background: none; white-space: nowrap; }
    .tools { display: flex; align-items: center; height: 49px; flex: none; background: #f3f3f3; border-bottom: 2px solid #808080; }
    .sep { width: 1px; height: 38px; margin: 0 5px 0 2px; background: #868686; }
    .grip { width: 10px; height: 42px; background: radial-gradient(circle, #b4b4b4 1px, transparent 1px) 3px 0 / 4px 4px repeat-y; flex: none; }
    .grip.edge { width: 12px; height: 46px; border-left: 1px solid #b0b0b0; }
    .dd { display: flex; align-items: center; padding-left: 3px; }
    .dd .more { width: 19px; height: 42px; padding: 0 0 0 2px; border: 0; background: none; display: flex; align-items: center; }
    .time { display: flex; gap: 14px; padding: 3px 0 0 6px; flex: none; }
    .scale { display: flex; flex-direction: column; gap: 1px; width: 147px; font: 10px/14px "Liberation Sans", "Noto Sans CJK KR", sans-serif; }
    .ticks { display: flex; justify-content: space-between; padding: 0 5px 0 2px; -webkit-text-stroke: 0.3px #111; }
    .ticks.hours { padding: 0; }
    .slider { appearance: none; display: block; width: 100%; height: 14px; margin: 0; background: none; }
    .slider::-webkit-slider-runnable-track { height: 8px; border-top: 2px solid #888; border-left: 1px solid #888; }
    .slider.month::-webkit-slider-runnable-track { background: linear-gradient(90deg, #fff, #f3c43c 33%, #e3171b 70%, #f7b8bd 88%, #fff); }
    .slider.hour::-webkit-slider-runnable-track { background: linear-gradient(90deg, #fff, #9cbcda 30%, #6878e8 62%, #3c4ab8 78%, #05050d); }
    .slider::-webkit-slider-thumb { appearance: none; width: 5px; height: 14px; margin-top: -4px; background: #fff; border: 1px solid #aaa; }
    .main { position: relative; display: grid; grid-template-columns: 88px minmax(0, 1fr) 302px; grid-template-rows: minmax(0, 1fr); flex: 1; min-height: 0; }
    .side { background: #f1f1f1; }
    .palette { padding: 9px 0 1px 2px; border-bottom: 1px solid #aaa; border-right: 1px solid #fff; background: radial-gradient(circle, #b4b4b4 1px, transparent 1px) 3px 2px / 4px 4px repeat-x #f3f3f3; }
    .group { display: grid; grid-template-columns: 42px 42px; }
    .group + .group { margin-top: 2px; padding-top: 5px; border-top: 1px solid #999; }
    .shade { position: absolute; left: 0; bottom: 0; width: 68.25%; height: 72px; background: rgba(0, 0, 0, 0.42); }
    .status { display: flex; align-items: center; height: 27px; flex: none; padding-left: 7px; border-top: 1px solid #c4c4c4; background: #f1f1f1; font-size: 17px; line-height: 24px; }
    .status .info { display: flex; gap: 17px; padding-top: 6px; }
    .status .info button { padding: 0; border: 0; background: none; display: block; }
    .status svg { display: block; }
    .bar { width: 1px; height: 16px; margin: 6px 11px 0; background: #999; }
    .hint { flex: 1; margin: 0; padding-top: 4px; white-space: nowrap; }
    .measure { display: flex; align-items: flex-end; gap: 8px; height: 26px; font-size: 16px; line-height: 22px; }
    .measure input { width: 250px; height: 24px; padding: 2px 4px 0; border: 1px solid #a9b9cc; border-bottom: 0; background: #fff; font: 16px/20px "Noto Sans", "Noto Sans CJK KR", sans-serif; margin-right: 5px; }
  `;

  private tools(list: Tool[], active = "") {
    return list.map(([icon, label]) => icon
      ? html`<tool-button .icon=${icon} .label=${label} ?active=${icon === active}></tool-button>`
      : html`<span class="sep"></span>`);
  }

  render() {
    const menu = ["파일(F)", "편집(E)", "보기(V)", "카메라(C)", "그리기(R)", "도구(T)", "창(W)", "도움말(H)"];
    const drawing: Tool[] = [["pencil", "선"], ["arc2", "2점 호"], ["rect", "직사각형"]];
    return html`
      <menu class="menu">${menu.map(m => html`<li><button>${m}</button></li>`)}</menu>
      <div class="tools" role="toolbar" aria-label="도구 모음">
        <span class="grip"></span>
        ${this.tools([["select", "선택"], SEP, ["eraser", "지우개"]])}
        ${drawing.map(([icon, label]) => html`<div class="dd"><tool-button .icon=${icon} .label=${label}></tool-button>
          <button class="more" aria-label=${label + " 더 보기"}><svg width="12" height="7" viewBox="0 0 12 7" aria-hidden="true"><path d="M0 0 L12 0 L6 7 Z"/></svg></button></div>`)}
        <span class="sep"></span>
        ${this.tools(standardTools, "offset")}
        <span class="grip edge"></span>
        ${this.tools(viewTools)}
        <span class="grip edge"></span>
        ${this.tools(solidTools)}
        <span class="grip edge"></span>
        ${this.tools([["shadow", "그림자"]])}
        <div class="time">
          <div class="scale"><input class="slider month" type="range" aria-label="날짜" min="0" max="100" value="86">
            <div class="ticks">${[..."JFMAMJJASOND"].map(m => html`<span>${m}</span>`)}</div></div>
          <div class="scale"><input class="slider hour" type="range" aria-label="시간" min="0" max="100" value="63">
            <div class="ticks hours"><span>07:08</span><span>정오</span><span>17:22</span></div></div>
        </div>
      </div>
      <main class="main">
        <aside class="side"><div class="palette">${sideTools.map(g => html`<div class="group">${this.tools(g, "offset")}</div>`)}</div></aside>
        <model-view></model-view>
        <side-tray></side-tray>
        <div class="shade"></div>
      </main>
      <footer class="status">
        <div class="info">
          <button aria-label="위치"><svg width="18" height="18" viewBox="0 0 18 18" fill="none" aria-hidden="true"><circle cx="9" cy="9" r="8" stroke="#a0a0a0" stroke-width="1.400"/><path d="M9 15 L6.500 8 A2.800 3 0 1 1 11.500 8 Z" fill="#999"/></svg></button>
          <button aria-label="정보"><svg width="18" height="18" viewBox="0 0 18 18" fill="none" aria-hidden="true"><circle cx="9" cy="9" r="8" stroke="#111" stroke-width="1.600"/><circle cx="9" cy="5" r="1.500" fill="#111"/><path d="M9 7 L9 14" stroke="#111" stroke-width="2.400"/></svg></button>
          <button aria-label="로그인"><svg width="18" height="18" viewBox="0 0 18 18" fill="none" aria-hidden="true"><circle cx="9" cy="9" r="8" stroke="#a0a0a0" stroke-width="1.400"/><circle cx="9" cy="6" r="3.200" fill="#999"/><path d="M3 14 Q4 10 9 10 Q14 10 15 14 Q9 19 3 14 Z" fill="#999"/></svg></button>
        </div>
        <span class="bar"></span>
        <p class="hint">오프셋을 정의할 점을 선택하거나 값을 입력하십시오. Alt = 겹침 허용.</p>
        <span class="bar"></span>
        <div class="measure"><label for="vcb">거리</label><input id="vcb" value="~ 120mm"></div>
      </footer>`;
  }
}
